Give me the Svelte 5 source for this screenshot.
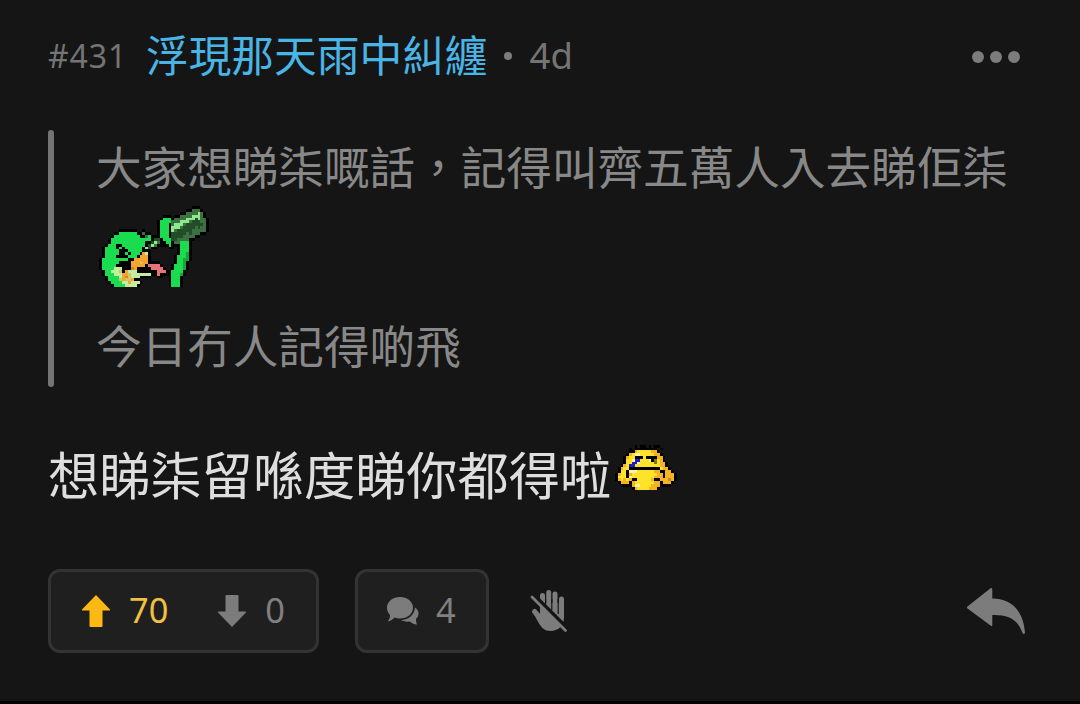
<script lang="ts">
	interface Pixel { x: number; y: number; fill: string; }

	const PALETTE: Record<string, string> = {
		K: '#000000',
		G: '#19dc4f',
		g: '#18a638',
		D: '#244c28',
		M: '#3d7040',
		L: '#8ce98c',
		O: '#f5a52e',
		o: '#c98a2c',
		P: '#e4747a',
		p: '#b84e56',
		T: '#c5ee9c',
		t: '#d2c66a',
		Y: '#ffe22a',
		W: '#fff3a0',
		y: '#f4b322',
		b: '#1c1ccc',
		e: '#7d7820'
	};

	const DUCK = [
		'...............................MMM',
		'.............................MMMMLM',
		'...........................MMMMLLLM',
		'.....................GGG.MMMMLLLDLMM',
		'....................GGGGMMMLLLMDDDMM',
		'....................GGGKMLLLMDDDDDDM',
		'....................GGGKLLLMDDDDMDMM',
		'....................GGGKLMDDDDDMMMMM',
		'......GGGGGG..M.....GGGKDDDDDMDMMM',
		'....GGGGGGGGG..MG...GGGKDDDDMMMM',
		'...GGGGGGGGGGGGGG.DDKGGGDDMMMM',
		'...GGGGGGGGGGGGK.DLMKKGGKMMGGG',
		'..GGGKKGGGGGGGGKDLMKKKKGKKKGGG',
		'.GGGGKGKGGGGGGKLDK.....KK..GGG',
		'.GGGGGKKKGGGGGKK..........KGGG',
		'.GGGGGKKGKGGGKOTK.........KGGg',
		'.GGGGKKKKGGGKOOOK.........GGGg',
		'GGGGGGGGGKKOOOOOK........KGGgg',
		'GGGGGGKKKKOOOtOOK........KGGgK',
		'GGGGGKKKKKOOOOOKPPPP.....GGGg',
		'GGGGTTTKKKoOKKKKKPPPPK...GGGg',
		'KGGTTTtKOTTTKKKKKKKPPPKKGGGGK',
		'.GGGTTTOOtTTTTTTT..PK.K.GGGg',
		'.KGGGGTOotTTTKKKK..KK...GGGK',
		'..GGGGtOttOKK...........GGG',
		'...GGGGTTOTTTK..........GGG',
		'....GGGGTTTTK...........GGG'
	];

	const SMIRK = [
		'......K.KK.K.KK',
		'....K.KKKKKKKK.K',
		'......yYYYYYyy',
		'....yYWWYYYYYyy',
		'...yYYKKKYKKKKyy',
		'...YYWbbYYYWKeYy',
		'...YYbbWYYYYYeYyy',
		'..yYbbYYYYYYYYYyy',
		'.yYYKKKKKKKKKKKYyy',
		'.YYKWWWYYYYYYyyKKyy',
		'yYYKyYYYYYYYYYyyKyyy',
		'YYYKWYYYYYYYYyyyKyyy',
		'yYyYyKKYYYYYyKKyyyoy',
		'.yyyKyYYYYYYYyyKyyy',
		'.....yWWYYYYyyy',
		'......yYYYYyyy'
	];

	function toPixels(rows: string[]): Pixel[] {
		const filled = (x: number, y: number) => {
			const c = rows[y]?.[x];
			return c !== undefined && c !== '.' && c !== 'K';
		};
		const out: Pixel[] = [];
		for (let y = -1; y <= rows.length - 1; y++) {
			for (let x = -1; x <= 37; x++) {
				const c = rows[y]?.[x];
				if (c && c !== '.') {
					out.push({ x, y, fill: PALETTE[c] });
				} else if (filled(x - 1, y) || filled(x + 1, y) || filled(x, y - 1) || filled(x, y + 1)) {
					// one pixel outline round every coloured area
					out.push({ x, y, fill: PALETTE.K });
				}
			}
		}
		return out;
	}

	const duck = toPixels(DUCK);
	const smirk = toPixels(SMIRK);

	let score = $state({ up: 70, down: 0 });
	let voted = $state(true);

	function vote() {
		voted = !voted;
		score.up += voted ? 1 : -1;
	}
</script>

{#snippet sprite(pixels: Pixel[], cols: number, rows: number, cell: number, name: string)}
	<svg
		class="sprite {name}"
		width={(cols + 2) * cell}
		height={(rows + 1) * cell}
		viewBox="-1 -1 {cols + 2} {rows + 1}"
		shape-rendering="crispEdges"
	>
		{#each pixels as p}
			<rect x={p.x} y={p.y} width="1" height="1" fill={p.fill} />
		{/each}
	</svg>
{/snippet}

<article class="post" lang="zh-Hant">
	<header class="head">
		<span class="num">#431</span>
		<span class="name">浮現那天雨中糾纏</span>
		<span class="dot"></span>
		<span class="time">4d</span>
		<button class="more" aria-label="More"><i></i><i></i><i></i></button>
	</header>

	<blockquote class="quote">
		<p>大家想睇柒嘅話，記得叫齊五萬人入去睇佢柒</p>
		{@render sprite(duck, 36, 27, 2.9, 'duck')}
		<p>今日冇人記得啲飛</p>
	</blockquote>

	<div class="body">
		<span>想睇柒留喺度睇你都得啦</span>
		{@render sprite(smirk, 20, 16, 2.8, 'smirk')}
	</div>

	<footer class="foot">
		<div class="box votes">
			<button class="vote" class:active={voted} onclick={vote}>
				<svg width="30" height="34" viewBox="0 0 30 34">
					<path d="M15 1 29 15.5Q29.500 16.500 28.500 16.500H21.500V32Q21.500 33 20.500 33H9.500Q8.500 33 8.500 32V16.500H1.500Q.5 16.500 1 15.500Z" />
				</svg>
				<span>{score.up}</span>
			</button>
			<button class="vote down">
				<svg width="30" height="34" viewBox="0 0 30 34">
					<path d="M15 33 29 18.500Q29.500 17.500 28.500 17.500H21.500V2Q21.500 1 20.500 1H9.500Q8.500 1 8.500 2V17.500H1.500Q.5 17.500 1 18.500Z" />
				</svg>
				<span>{score.down}</span>
			</button>
		</div>
		<button class="box replies">
			<svg width="34" height="30" viewBox="0 0 34 30">
				<path d="M14 1C21.200 1 27 5.700 27 11.800S21.200 22.500 14 22.500C12 22.500 10.200 22.200 8.600 21.600C6.500 23.700 4.200 25.200 1.600 25.500C3.100 23.800 4 21.800 4.100 19.200C2.200 17.200 1 14.600 1 11.800C1 5.700 6.800 1 14 1Z" />
				<path d="M29 11.500C31.400 13 32.500 15.200 32.500 17.500C32.500 19.700 31.600 21.600 30 23C30 25.200 30.300 26.800 31.200 28.600C27.500 28.300 25.600 27 23.700 25.500C20.800 26 17.500 25.300 15 24.200C22.500 23.800 28.600 18.800 29 11.500Z" />
			</svg>
			<span>4</span>
		</button>
		<button class="icon" aria-label="Block">
			<svg width="38" height="44" viewBox="0 0 38 44">
				<g fill="none" stroke="#7c7c7c" stroke-width="5" stroke-linecap="round">
					<path d="M12.500 6.500V24M18.700 3.600V24M25 5V26M31.500 10V26M4.500 22.500 12 31" />
				</g>
				<path d="M10.200 14H34V29C34 37 28 42 20.500 42C14.500 42 11.500 38.500 9 34.500L3.500 24.500L10.200 25Z" />
				<path d="M15.600 10V19M21.800 10V21M28.200 10V25" stroke="#151515" stroke-width="1.200" />
				<path d="M4 6.500 37 39.500" stroke="#151515" stroke-width="4.500" />
				<path d="M2 8 35.500 41.500" stroke="#7c7c7c" stroke-width="2.800" stroke-linecap="round" />
			</svg>
		</button>
		<button class="icon reply" aria-label="Reply">
			<svg width="60" height="50" viewBox="0 0 60 50">
				<path d="M1.500 19.500 24.500 1.200Q26.300 .2 26.300 2.500V11.500C44 11.500 57 22 59 45.500Q58 48.500 56.300 45.500C52 33 43 27.500 26.300 28V37.500Q26.300 40 24.500 38.500L1.500 21.500Q.3 20.500 1.500 19.500Z" />
			</svg>
		</button>
	</footer>
</article>

<style>
	:global(body) {
		background: #000;
	}

	.post {
		box-sizing: border-box;
		height: 701px;
		padding: 28px 48px 0;
		display: flex;
		flex-direction: column;
		background: #151515;
		color: #747474;
		font-family: 'Noto Sans', 'Noto Sans CJK TC', sans-serif;
	}

	button {
		padding: 0;
		border: 0;
		background: none;
		color: inherit;
		font: inherit;
		cursor: pointer;
	}

	svg {
		display: block;
		fill: #7c7c7c;
		flex: none;
	}

	.head {
		display: flex;
		align-items: center;
		height: 56px;
	}

	.num {
		width: 98px;
		margin-top: -2px;
		font-size: 32px;
		letter-spacing: 0.9px;
	}

	.name {
		font-size: 42.7px;
		line-height: 56px;
		color: #49b5e7;
	}

	.dot {
		width: 8px;
		height: 8px;
		margin: 0 18px 0 16px;
		border-radius: 50%;
		background: #7c7c7c;
	}

	.time {
		margin-top: -2px;
		font-size: 36.5px;
	}

	.more {
		display: flex;
		gap: 6px;
		margin: 2px 12px 0 auto;
	}

	.more i {
		width: 12px;
		height: 12px;
		border-radius: 50%;
		background: #7c7c7c;
	}

	.quote {
		position: relative;
		box-sizing: border-box;
		height: 257px;
		margin: 46px 0 0;
		padding: 3px 0 0 48px;
		color: #888;
		font-size: 45.6px;
		line-height: 68px;
		white-space: nowrap;
	}

	.quote::before {
		content: '';
		position: absolute;
		inset: 0 auto 0 0;
		width: 6px;
		border-radius: 3px;
		background: #747474;
	}

	.quote p {
		margin: 0;
	}

	.duck {
		margin: 5px 0 25px 3px;
	}

	.body {
		display: flex;
		align-items: center;
		height: 76px;
		margin-top: 50px;
		color: #dedede;
		font-size: 51.2px;
		line-height: 76px;
	}

	.smirk {
		margin: -18px 0 0 4px;
	}

	.foot {
		display: flex;
		align-items: center;
		margin-top: 56px;
		font-size: 34.4px;
		color: #808080;
	}

	.foot span {
		margin-top: -3px;
	}

	.box {
		box-sizing: border-box;
		display: flex;
		align-items: center;
		height: 84px;
		border: 3px solid #333;
		border-radius: 12px;
		background: #1f1f1f;
	}

	.votes {
		width: 271px;
		padding-left: 30px;
	}

	.vote {
		display: flex;
		align-items: center;
		gap: 18px;
	}

	.down {
		margin-left: 49px;
	}

	.active {
		color: #f0c040;
	}

	.active svg {
		fill: #fcb913;
	}

	.replies {
		width: 134px;
		margin-left: 36px;
		padding-left: 28px;
		gap: 16px;
	}

	.icon {
		margin-left: 41px;
	}

	.reply {
		margin: 2px 6px 0 auto;
	}
</style>
